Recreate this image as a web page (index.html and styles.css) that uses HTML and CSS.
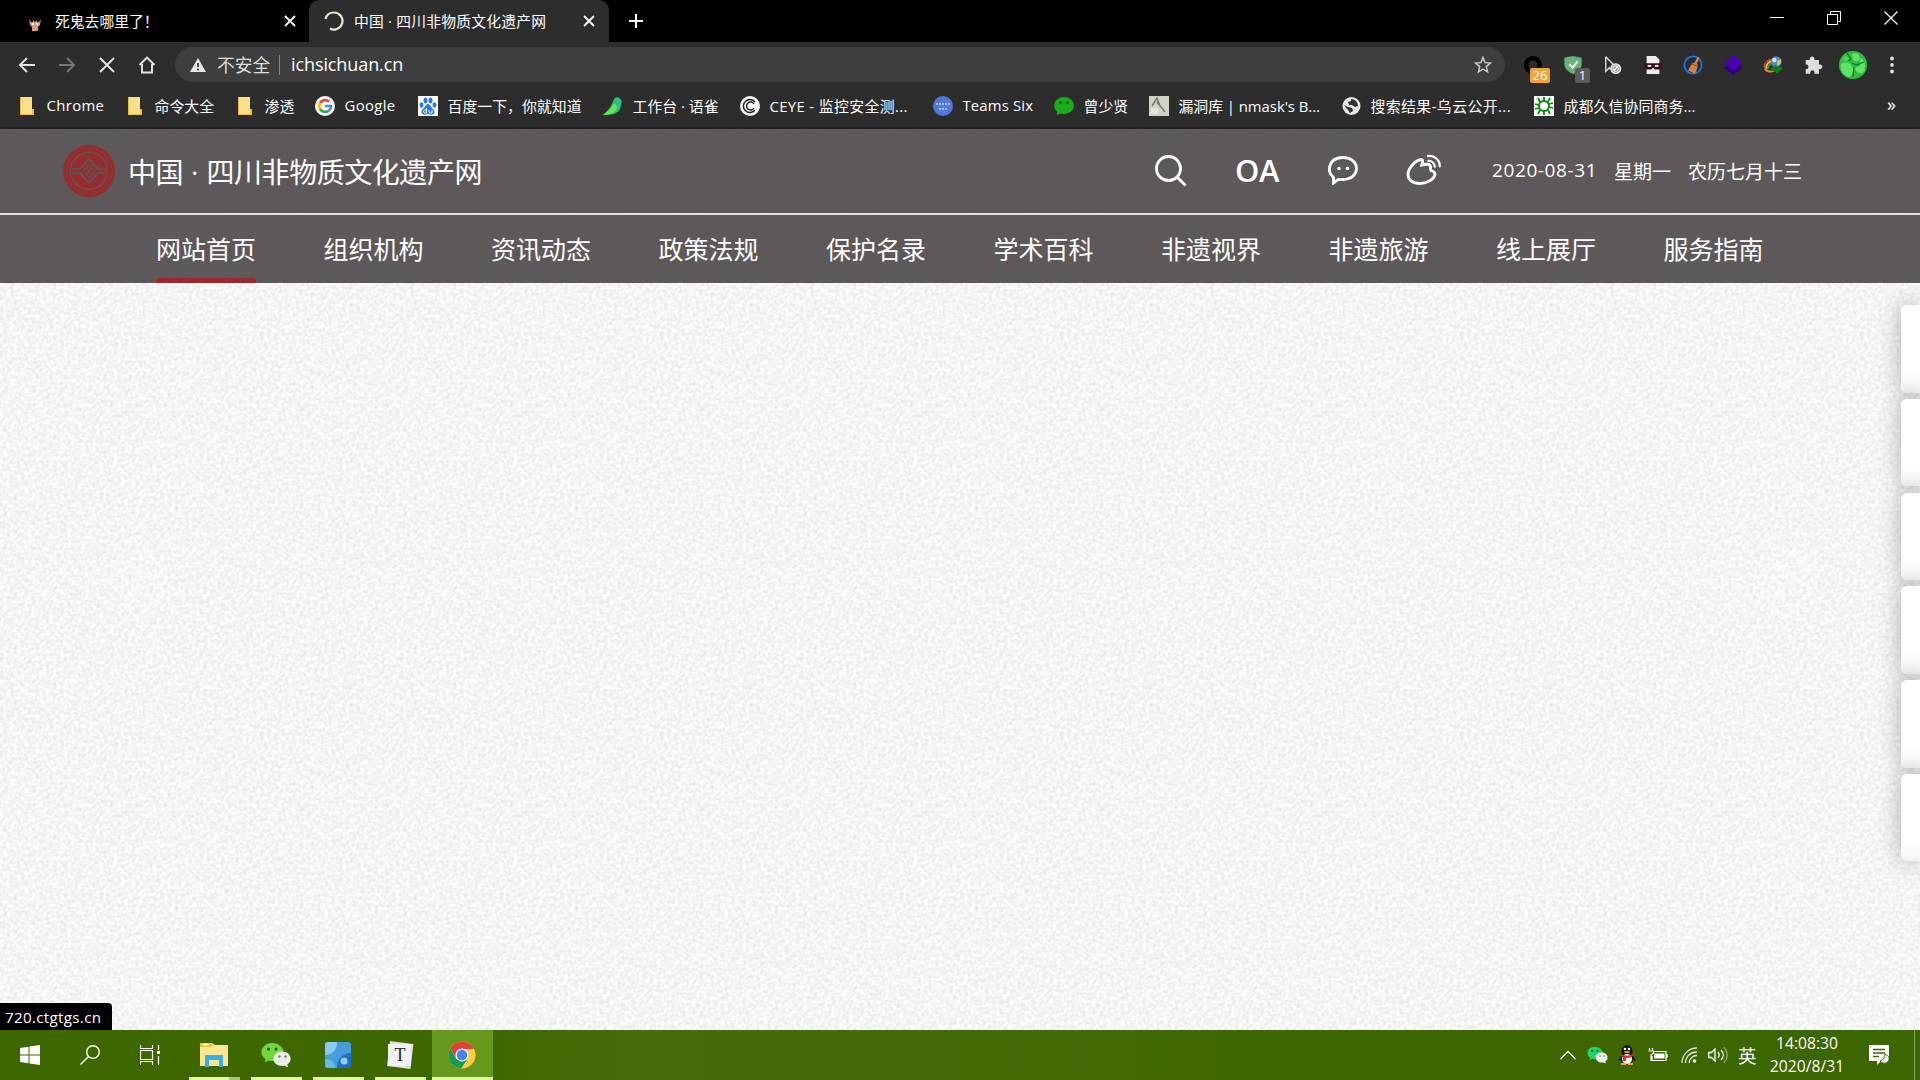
FILE: index.html
```html
<!DOCTYPE html>
<html lang="zh-CN">
<head>
<meta charset="utf-8">
<title>中国 · 四川非物质文化遗产网</title>
<link rel="stylesheet" href="styles.css">
</head>
<body>
<svg width="0" height="0" class="defs">
  <defs>
    <symbol id="folder" viewBox="0 0 20 20"><path d="M3 1h12v12h2v6H3z" fill="#fbe08c"/><path d="M3 1v18h14v-6h-2v5H4V1z" fill="#e8bd3e"/></symbol>
    <symbol id="close" viewBox="0 0 12 12"><path d="M1 1l10 10M11 1L1 11" fill="none" stroke="currentColor" stroke-width="1.8"/></symbol>
    <symbol id="wechat" viewBox="0 0 30 26"><path d="M11 1C5 1 .5 5 .5 10c0 3 1.600 5.500 4 7l-1 3.500 4-2c8 2 15-2 15-8.500C22.500 5 17 1 11 1z" fill="var(--bubble)"/><g fill="#16502a"><circle cx="7.500" cy="7" r="1.500"/><circle cx="15" cy="7" r="1.500"/></g><path d="M21.500 9.500c-5 0-9 3-9 7.200 0 5 5 8 11 7l3.500 1.500-.6-3c2-1.300 3.200-3.200 3.200-5.500 0-4-3.600-7.200-8.100-7.200z" fill="#ececec"/><circle cx="18.500" cy="14.500" r="1.200" fill="#777"/><circle cx="24.500" cy="14.500" r="1.200" fill="#777"/></symbol>
    <symbol id="ornament" viewBox="0 0 60 76"><path d="M30 3l27 22-14 10-22-19M3 32l20-12 33 26-27 27-14-14 13-12M14 31l14 12-12 10L5 41" fill="none" stroke="#fff" stroke-width="4"/></symbol>
  </defs>
</svg>

<header class="browser">
  <div class="tabs">
    <div class="tab">
      <svg class="favicon" viewBox="0 0 14 14"><path d="M1 1l2 3 2 0 0-2 2 2 2-2 0 2 2 0 2-3-1 6-2 2v4H4V9L2 7z" fill="#d79a76"/><path d="M4 5h2v2H4zM8 5h2v2H8z" fill="#fff"/></svg>
      <span class="tab-title ghost">死鬼去哪里了！</span>
      <svg class="x"><use href="#close"/></svg>
    </div>
    <div class="tab active">
      <svg class="spinner" viewBox="0 0 20 20"><path d="M1.500 8A8.500 8.500 0 0 1 10 1.500a8.500 8.500 0 1 1-4 16" fill="none" stroke="#eeead5" stroke-width="2.200"/></svg>
      <span class="tab-title site">中国 · 四川非物质文化遗产网</span>
      <svg class="x"><use href="#close"/></svg>
    </div>
    <svg class="plus" viewBox="0 0 16 16"><path d="M8 1v14M1 8h14" stroke="#fff" stroke-width="2"/></svg>
    <div class="window-buttons">
      <svg viewBox="0 0 14 14"><path d="M0 6.500h14" stroke="#fff"/></svg>
      <svg viewBox="0 0 14 14"><path d="M.5 3.500h10v10H.5zM3.500 3V.5h10v10H11" fill="none" stroke="#fff"/></svg>
      <svg viewBox="0 0 14 14"><path d="M.5.5l13 13M13.500.5l-13 13" stroke="#fff" stroke-width="1.200"/></svg>
    </div>
  </div>

  <div class="toolbar">
    <div class="nav-buttons">
      <svg viewBox="0 0 18 18"><path d="M17 9H2M9 2L2 9l7 7" /></svg>
      <svg viewBox="0 0 18 18" class="dim"><path d="M1 9h15M9 2l7 7-7 7"/></svg>
      <svg viewBox="0 0 18 18"><path d="M2 2l14 14M16 2L2 16"/></svg>
      <svg viewBox="0 0 18 18"><path d="M1.500 9L9 1.500 16.500 9M4 8v8.500h10V8"/></svg>
    </div>
    <div class="omnibox">
      <svg class="warn" viewBox="0 0 16 14"><path d="M8 0l8 14H0z" fill="#e8e8e8"/><path d="M8 5v4M8 10.500v2" stroke="#3e3e3e" stroke-width="1.800"/></svg>
      <span class="insecure">不安全</span>
      <span class="divider"></span>
      <span class="url">ichsichuan.cn</span>
      <svg class="star" viewBox="0 0 20 20"><path d="M10 2.500l2 5.200 5.500.4-4.300 3.500 1.400 5.400-4.600-3-4.600 3 1.400-5.400L2.500 8.100 8 7.700z" fill="none" stroke="#d0d0d0" stroke-width="1.400"/></svg>
    </div>
    <div class="extensions">
      <div class="ext"><svg viewBox="0 0 22 22"><circle cx="11" cy="11" r="7.500" fill="none" stroke="#000" stroke-width="5"/></svg><b class="count orange">26</b></div>
      <div class="ext"><svg viewBox="0 0 22 22"><path d="M11 1l9.500 2v7c0 5-4 9-9.500 11-5-2-9.500-6-9.500-11V3z" fill="#67b279"/><path d="M7 10l3.500 4 5.500-7" fill="none" stroke="#fff" stroke-width="2"/></svg><b class="count gray">1</b></div>
      <div class="ext"><svg viewBox="0 0 22 22"><path d="M3 2v16l4-4 1 2M3 2l9 9" fill="none" stroke="#ddd" stroke-width="1.500"/><circle cx="14" cy="15" r="5.300" fill="#aaa" stroke="#eee" stroke-width="1.500"/><circle cx="14" cy="15" r="3" fill="#888" stroke="#fff"/><path d="M12 17l4-4" stroke="#fff" stroke-width="1.500"/></svg></div>
      <div class="ext"><svg viewBox="0 0 22 22"><path d="M4 1h10l4 4v16H4z" fill="#eee"/><path d="M1 9h20l-1.500 7h-6.500l-2-2-2 2H2.500z" fill="#3b0f16"/><path d="M5 11h4v2H5zM13 11h4v2h-4z" fill="#fff"/></svg></div>
      <div class="ext"><svg viewBox="0 0 22 22"><circle cx="11" cy="11" r="9.500" fill="#242b36" stroke="#1b78df" stroke-width="2"/><path d="M16 2l2 1-2.500 6 1 3-3 8.500-8-3.500 4-7 3.500-2z" fill="#d28443"/><path d="M9 9.500l7.500 3" stroke="#7e451f"/></svg></div>
      <div class="ext"><svg viewBox="0 0 22 22"><path d="M1 14l10-7 10 7-10 8z" fill="#230079"/><path d="M11 0l10 9-10 9L1 9z" fill="#4a00b3"/></svg></div>
      <div class="ext"><svg viewBox="0 0 22 22"><g fill="none" stroke-width="2"><path d="M1.500 14c0-6 4-9 9-9" stroke="#e93f2d"/><path d="M3.500 15c0-5 3-8 7-8" stroke="#f9df32"/><path d="M2 15c3 4 7 4 11 2" stroke="#f08a2a"/><path d="M5.500 15c0-3 2-6 6-6" stroke="#20b040"/></g><circle cx="14.500" cy="7.500" r="6" fill="#4b86d0"/><circle cx="12.500" cy="5.500" r="2.500" fill="#d7e8fb"/><path d="M16 6l4-1-1 5-4 2z" fill="#d7cf55"/><path d="M8 14l5-1v-2l9 3-7 7-1-3c-3 0-5-1-6-4z" fill="#0d7d1a"/></svg></div>
      <div class="ext"><svg viewBox="0 0 22 22"><path d="M3 5.500h4.500c-1-5 6-5 5 0h5v5c5-1 5 6 0 5v5h-5c1-5-5-5-4.500 0H3v-5c4 1 4-6 0-5z" fill="#dedede"/></svg></div>
    </div>
    <svg class="avatar" viewBox="0 0 28 28"><circle cx="14" cy="14" r="14" fill="#2fbd43"/><path d="M2 13c5-3 10-1 12 4 1 4-1 8-4 9C5 25 1 20 2 13zM13 3c5-2 8 1 8 5-3 4-8 3-8-5zM22 7c4 3 5 8 3 10-4 0-6-5-3-10zM16 17c4-3 9-2 10 2-3 5-9 4-10-2z" fill="#5ee567"/><path d="M4 6c3-2 6 0 6 4-3 1-6 0-6-4z" fill="#48d455"/><path d="M8 2l4 6-3 2M13 12l4 2 8-3M15 16l-1 10" stroke="#0f7a22" stroke-width="1.300" fill="none"/></svg>
    <svg class="more" viewBox="0 0 6 20"><g fill="#ddd"><circle cx="3" cy="3.500" r="1.900"/><circle cx="3" cy="10" r="1.900"/><circle cx="3" cy="16.500" r="1.900"/></g></svg>
  </div>

  <div class="bookmarks">
    <div><svg><use href="#folder"/></svg><span class="chrome">Chrome</span></div>
    <div><svg><use href="#folder"/></svg><span>命令大全</span></div>
    <div><svg><use href="#folder"/></svg><span>渗透</span></div>
    <div><svg viewBox="0 0 20 20"><circle cx="10" cy="10" r="10" fill="#fff"/><g fill="none" stroke-width="2.700"><path d="M5 7a6 6 0 0 1 9-1.500" stroke="#ea4335"/><path d="M5 7a6 6 0 0 0 0 6" stroke="#fbbc05"/><path d="M5 13a6 6 0 0 0 9 1.500" stroke="#34a853"/><path d="M14 14.500a6 6 0 0 0 2-4.500h-6" stroke="#4285f4"/></g></svg><span class="google">Google</span></div>
    <div><svg viewBox="0 0 20 20"><path d="M0 0h20v20H0z" fill="#fff"/><g fill="#2b76e8"><ellipse cx="3.500" cy="9" rx="2" ry="2.700"/><ellipse cx="7.500" cy="4.500" rx="2" ry="2.900"/><ellipse cx="12.500" cy="4.500" rx="2" ry="2.900"/><ellipse cx="16.500" cy="9" rx="2" ry="2.700"/><path d="M10 8c2 0 3 3 5 5 4 4 0 7-5 5-5 2-9-1-5-5 2-2 3-5 5-5z"/></g><path d="M8.500 12v5H7c-2 0-2-3 0-3h1M11 14v2c0 1 1 1 2 1h1v-3" fill="none" stroke="#fff"/></svg><span class="baidu">百度一下，你就知道</span></div>
    <div><svg viewBox="0 0 20 20"><path d="M11 3c2-3 6-2 7 1l1 1-1 3c0 8-5 11-18 11C6 14 9 9 11 3z" fill="#26c281"/><path d="M0 19C6 15 9 10 11 8c7 3 1 11-11 11z" fill="#6ee256"/></svg><span>工作台 · 语雀</span></div>
    <div><svg viewBox="0 0 20 20"><circle cx="10" cy="10" r="10" fill="#f4f4f4"/><path d="M15 6a6.500 6.500 0 1 0 0 8M14 8a4 4 0 1 0 0 4" fill="none" stroke="#222" stroke-width="1.400"/></svg><span class="ceye">CEYE - 监控安全测...</span></div>
    <div><svg viewBox="0 0 20 20"><circle cx="10" cy="10" r="10" fill="#5079dc"/><path d="M3 8h14M6 13h8" stroke="#a9c0f5" stroke-width="1.800" stroke-dasharray="2 1"/></svg><span class="teams">Teams Six</span></div>
    <div><svg viewBox="0 0 20 20"><ellipse cx="10" cy="9.500" rx="10" ry="8.500" fill="#1aad19"/><path d="M3 15v4l5-2z" fill="#1aad19"/><circle cx="6.500" cy="6.500" r="1.200" fill="#105d10"/><circle cx="13.500" cy="6.500" r="1.200" fill="#105d10"/></svg><span>曾少贤</span></div>
    <div><svg viewBox="0 0 20 20"><path d="M0 0h20v20H0z" fill="#d3d2ca"/><path d="M3 10L8 2l3 8M8 6l8 10" stroke="#777" fill="none" stroke-width="1.500"/><path d="M2 12h7v6H2z" fill="#e6e5df"/></svg><span class="nmask">漏洞库 | nmask's B...</span></div>
    <div><svg viewBox="0 0 20 20"><circle cx="10.500" cy="10" r="9" fill="#e7e7e7"/><path d="M10 3c4 0 7 3 7 7l-3 1-3-2-3 0-1-3 3-1zM3 9l4 2 4 1 1 3-3 2-2-3z" fill="#333"/></svg><span class="wooyun">搜索结果-乌云公开...</span></div>
    <div><svg viewBox="0 0 20 20"><path d="M0 0h20v20H0z" fill="#fff"/><circle cx="10" cy="10" r="5" fill="none" stroke="#078a0b" stroke-width="2"/><path d="M10 1v4M10 15v4M1 8l4 1M15 11l4 1M4 2l2 4M14 14l2 4M16 2l-2 4M6 14l-2 4M1 13l4-1M15 8l4-1" stroke="#078a0b" stroke-width="1.800"/></svg><span class="chengdu">成都久信协同商务...</span></div>
    <div class="overflow">»</div>
  </div>
</header>

<main class="page">
  <div class="site-head">
    <div class="site-top">
      <svg class="emblem" viewBox="0 0 52 52"><circle cx="26" cy="26" r="26" fill="#982b2d"/><g fill="none" stroke="#685052"><circle cx="26" cy="26" r="22.500" stroke-dasharray="2 2.500" stroke-width="2.500" opacity=".5"/><circle cx="26" cy="26" r="18.500" stroke-width="1.500"/><path d="M9 24h8l9-10 9 10h8M9 28h8l9 10 9-10h8" stroke-width="2.400"/><path d="M26 20l6 6-6 6-6-6zM23 23l6 6M29 23l-6 6" stroke-width="1.300"/></g></svg>
      <h1>中国<i> · </i>四川非物质文化遗产网</h1>
      <div class="site-tools">
        <svg class="t-search" viewBox="0 0 32 32"><circle cx="13.500" cy="13.500" r="12" /><path d="M22 22l8.500 8.500"/></svg>
        <span class="oa">OA</span>
        <svg class="t-chat" viewBox="0 0 30 30"><path d="M5.500 22.500C-2 16 1 2.500 15 2.500c18 0 18 22 0 22-2 0-4 0-5 .2L5.500 28z"/><circle class="dot" cx="11" cy="13.500" r="1.800"/><circle class="dot" cx="19.500" cy="13.500" r="1.800"/></svg>
        <svg class="t-weibo" viewBox="0 0 36 32"><path d="M15 5.500c2 0 2 2 .8 5.500 4-1 8-1.500 8.700 1.500.3 2-.5 3 .5 4 2 1 4 1 4 4-1 5-8 9-15 9C7 29.500 2 26 2 20.500 2 14 10 6 15 5.500z"/><path d="M21 2.200c7-1.500 14 4 12.500 11M21.500 7c4.500-.6 8 3 7 6.500" stroke-width="2.200"/></svg>
      </div>
      <div class="date"><span class="ymd">2020-08-31</span><span>星期一</span><span>农历七月十三</span></div>
    </div>
    <nav class="site-nav">
      <a class="current">网站首页</a><a>组织机构</a><a>资讯动态</a><a>政策法规</a><a>保护名录</a><a>学术百科</a><a>非遗视界</a><a>非遗旅游</a><a>线上展厅</a><a>服务指南</a>
    </nav>
  </div>
  <div class="stage">
    <svg class="arrow prev"><use href="#ornament"/></svg>
    <svg class="arrow next"><use href="#ornament"/></svg>
  </div>
  <aside class="side"><i></i><i></i><i></i><i></i><i></i><i></i></aside>
  <div class="status">720.ctgtgs.cn</div>
</main>

<footer class="taskbar">
  <div class="sys"><svg viewBox="0 0 20 20"><path d="M0 3l8.500-1.200v7.700H0zM9.500 1.600L20 0v9.500H9.500zM0 10.500h8.500v7.700L0 17zM9.500 10.500H20V20L9.500 18.400z" fill="#fff"/></svg></div>
  <div class="sys"><svg viewBox="0 0 20 20"><g fill="none" stroke="#fff" stroke-width="1.400"><circle cx="13" cy="7" r="6.300"/><path d="M8.500 11.500L.5 19.500"/></g></svg></div>
  <div class="sys last"><svg viewBox="0 0 20 20"><path d="M.5 0v3.500h12V0M.5 20v-3.500h12V20M.5 5.500h12v9H.5zM18.500 0v5M18.500 11v9" fill="none" stroke="#fff" stroke-width="1.200"/><path d="M17 6h3v3h-3z" fill="#fff"/></svg></div>
  <div class="app explorer"><svg viewBox="0 0 28 26"><path d="M0 3V1h12l3 2h13v21H0z" fill="#ffe694"/><path d="M0 5V1h11l2 2-1 2z" fill="#f7c223"/><path d="M3 2.500h6" stroke="#fff" stroke-width="1.500"/><path d="M5 25V13h18v12h-4v-7H9v7z" fill="#36b1e8"/></svg></div>
  <div class="app"><svg class="wx"><use href="#wechat"/></svg></div>
  <div class="app"><svg viewBox="0 0 28 28"><rect x="1" y="1" width="26" height="26" rx="3" fill="#4a9ddc"/><path d="M1 14A12 12 0 0 0 13 1H4a3 3 0 0 0-3 3z" fill="#83cdf3"/><path d="M27 12a14 14 0 0 0-14 15h11a3 3 0 0 0 3-3z" fill="#226dca"/><circle cx="20" cy="20" r="3.500" fill="#8cd0f5"/><path d="M1 18a9 9 0 0 1 10 9H4a3 3 0 0 1-3-3z" fill="#67b8e9"/></svg></div>
  <div class="app"><svg viewBox="0 0 28 28"><path d="M4 0l23.500 3-3 25L1 25z" fill="#dcdcdc"/><path d="M2 3h23v22H2z" fill="#f1f1f1"/><text x="14" y="20" text-anchor="middle" font-family="Liberation Serif" font-size="18" fill="#222">T</text></svg></div>
  <div class="app on"><svg viewBox="0 0 28 28"><circle cx="14" cy="14" r="13.500" fill="#ffcd40"/><path d="M14 .5A13.500 13.500 0 0 1 26 8H14L8 17 2.200 7.500A13.500 13.500 0 0 1 14 .5z" fill="#db4437"/><path d="M2.200 7.500L8.200 18 14 20l5-1-6 8.500A13.500 13.500 0 0 1 2.200 7.500z" fill="#0f9d58"/><circle cx="14" cy="14" r="6.500" fill="#fff"/><circle cx="14" cy="14" r="5.300" fill="#4285f4"/></svg></div>
  <div class="tray">
    <svg class="caret" viewBox="0 0 16 10"><path d="M.5 9L8 1.500 15.500 9" fill="none" stroke="#fff" stroke-width="1.400"/></svg>
    <svg class="mini-wx"><use href="#wechat"/></svg>
    <svg class="qq" viewBox="0 0 18 20"><ellipse cx="9" cy="6.500" rx="5.500" ry="6.500" fill="#111"/><path d="M4 9L0 16l3-1c1 6 11 6 12 0l3 1-4-7z" fill="#111"/><ellipse cx="9" cy="14" rx="5" ry="5" fill="#fff"/><circle cx="7" cy="4" r="1.300" fill="#fff"/><circle cx="11" cy="4" r="1.300" fill="#fff"/><ellipse cx="9" cy="7" rx="3" ry="1" fill="#f7a51b"/><path d="M3 9c4 2 8 2 12 0v2c-3 2-6 2-7 2v3H5v-4l-2-1z" fill="#e62828"/><path d="M3 18h5v2H3zM10 18h5v2h-5z" fill="#f7a51b"/></svg>
    <svg class="battery" viewBox="0 0 20 14"><path d="M5 3.500h13v9H4V8M19 6v4M1.500 0v3M4.500 0v3M.5 3h5v2L3 7v6" fill="none" stroke="#fff" stroke-width="1.200"/><path d="M6 5.500h10.500v5H6z" fill="#fff"/></svg>
    <svg class="wifi" viewBox="0 0 16 16"><g fill="none" stroke="#e2e8d8" stroke-width="1.300"><path d="M1 16A15 15 0 0 1 16 1M4.500 16A11 11 0 0 1 16 5M8 16a8 8 0 0 1 8-7.500"/></g><circle cx="13.500" cy="14" r="1.800" fill="#fff"/></svg>
    <svg class="volume" viewBox="0 0 20 18"><path d="M.7 6.500h2.800L7 3v12l-3.500-3.500H.7zM10 6c1.500 2 1.500 4 0 6M13 4c3 3 3 7 0 10" fill="none" stroke="#fff" stroke-width="1.300"/><path d="M16 1c4 5 4 11 0 16" fill="none" stroke="#9db17e" stroke-width="1.200"/></svg>
    <span class="ime">英</span>
    <div class="clock"><span>14:08:30</span><span>2020/8/31</span></div>
    <svg class="notice" viewBox="0 0 20 20"><path d="M0 0h20v16h-8l-4 4v-4H0z" fill="#fff"/><path d="M4 4.500h12M4 8h12M4 11.500h6" stroke="#3e6700" stroke-width="1.500"/><path d="M16 9c0 4-2 6-5 7 4 5 10 1 9-4-1-1-2-2-4-3z" fill="#fff" stroke="#3e6700"/></svg>
    <span class="peek"></span>
  </div>
</footer>
</body>
</html>
```
FILE: styles.css
```css
* { box-sizing: border-box; }
body {
  margin: 0;
  width: 1920px;
  height: 1080px;
  overflow: hidden;
  display: flex;
  flex-direction: column;
  font-family: "Open Sans", "Noto Sans CJK SC", sans-serif;
  color: #fff;
}
.defs { position: absolute; }
svg { display: block; flex: none; }
span { white-space: nowrap; }

/* Browser chrome */
.browser { height: 129px; flex: none; background: #2d2d2d; border-bottom: 2px solid #202020; }
.tabs { height: 42px; background: #000; display: flex; align-items: center; }
.tab { width: 309px; height: 42px; padding: 0 13px 0 28px; display: flex; align-items: center; font-size: 14.800px; }
.tab.active { width: 300px; padding: 0 14px 0 15px; background: #2d2d2d; border-radius: 10px 10px 0 0; }
.tab-title { padding-bottom: 2px; }
.tab-title.site { letter-spacing: .2px; }
.tab .x { width: 12px; height: 12px; margin-left: auto; }
.favicon { width: 14px; height: 14px; margin: 8px 13px 0 0; }
.spinner { width: 20px; height: 20px; margin-right: 10px; }
.plus { width: 16px; height: 16px; margin-left: 19px; }
.window-buttons { margin: -6px 22px 0 auto; display: flex; gap: 43px; }
.window-buttons svg { width: 14px; height: 14px; }

.toolbar { height: 45px; display: flex; align-items: center; }
.nav-buttons { width: 175px; padding-left: 18px; display: flex; gap: 22px; }
.nav-buttons svg { width: 18px; height: 18px; fill: none; stroke: #e6e6e6; stroke-width: 1.900; }
.nav-buttons .dim { stroke: #777; }
.omnibox { width: 1330px; height: 35px; padding: 0 12px 0 15px; border-radius: 18px; background: #3e3e3e; display: flex; align-items: center; font-size: 18px; }
.warn { width: 16px; height: 14px; margin-right: 11px; }
.insecure { color: #ddd; width: 62px; padding-bottom: 2px; font-size: 17.800px; }
.divider { width: 1px; height: 20px; background: #888; margin-right: 11px; }
.url { padding-bottom: 2px; letter-spacing: -.1px; }
.star { width: 20px; height: 20px; margin-left: auto; }
.extensions { display: flex; gap: 18px; margin-left: 17px; }
.ext { width: 22px; height: 22px; position: relative; }
.ext svg { width: 20px; height: 20px; margin: 1px; }
.count { position: absolute; left: 8px; top: 14px; min-width: 15px; height: 15px; padding: 0 2px; border-radius: 2px; font: 13px/15px "Open Sans", sans-serif; text-align: center; }
.orange { background: #f0a33f; width: 20px; }
.gray { background: #5b5b5b; left: 13px; }
.avatar { width: 28px; height: 28px; margin-left: 15px; }
.more { width: 6px; height: 20px; margin-left: 22px; }

.bookmarks { height: 38px; padding-left: 17px; display: grid; grid-template-columns: 108px 110px 80px 103px 185px 137px 193px 121px 95px 192px 193px 353px 20px; align-items: center; font-size: 14.900px; }
.bookmarks div { display: flex; align-items: center; gap: 9.500px; }
.bookmarks svg { width: 20px; height: 20px; }
.bookmarks span { padding-bottom: 2px; }
.bookmarks .overflow { padding-bottom: 5px; font-size: 18px; }
.bookmarks .chrome, .bookmarks .google { letter-spacing: .35px; }
.bookmarks .ceye { letter-spacing: .35px; }
.bookmarks .wooyun { letter-spacing: .4px; }
.bookmarks .teams { letter-spacing: .15px; }
.bookmarks .chengdu { letter-spacing: .1px; }
.bookmarks .nmask { letter-spacing: -.05px; }

/* Web page */
.page {
  flex: 1;
  position: relative;
  background-color: #f4f4f4;
  background-image: url("data:image/svg+xml,%3Csvg xmlns='http://www.w3.org/2000/svg' width='400' height='400'%3E%3Cfilter id='n' x='0' y='0' width='100%25' height='100%25' color-interpolation-filters='sRGB'%3E%3CfeTurbulence type='fractalNoise' baseFrequency='.28' numOctaves='3' stitchTiles='stitch'/%3E%3CfeColorMatrix values='.14 0 0 0 .889 .14 0 0 0 .889 .14 0 0 0 .889 0 0 0 0 1'/%3E%3C/filter%3E%3Crect width='400' height='400' filter='url(%23n)'/%3E%3C/svg%3E");
}
.site-head { height: 154px; background: rgba(76, 71, 72, .9); }
.site-top { height: 86px; padding-left: 63px; border-bottom: 2px solid #e1e5e1; display: flex; align-items: center; }
.emblem { width: 52px; height: 52px; }
h1 { margin: 2px 0 0 13px; width: 360px; font-size: 28px; font-weight: 400; line-height: 40px; letter-spacing: -.45px; white-space: nowrap; }
h1 i { font-style: normal; letter-spacing: .5px; }
.site-tools { margin-left: 667px; display: flex; align-items: center; fill: none; stroke: #fff; stroke-width: 2.800; }
.t-search { width: 32px; height: 32px; margin-top: -1px; }
.oa { width: 44px; margin: -2px 49px 0 48px; font-size: 31px; line-height: 32px; font-weight: 600; letter-spacing: -.5px; }
.t-chat { width: 30px; height: 30px; margin-top: -2px; }
.t-chat .dot { fill: #fff; stroke: none; }
.t-weibo { width: 36px; height: 32px; margin: -2px 0 0 48px; }
.date { margin-left: 50px; display: flex; font-size: 19px; gap: 17px; }
.ymd { width: 105px; letter-spacing: .6px; }
.site-nav { height: 68px; padding-left: 156px; display: flex; gap: 67.500px; }
.site-nav a { width: 100px; height: 68px; font-size: 25px; line-height: 69px; white-space: nowrap; position: relative; }
.current::after { content: ""; position: absolute; left: 0; bottom: 0; width: 100px; height: 5px; border-radius: 3px 3px 0 0; background: #9b282b; }
.stage { padding: 262px 104px 0 108px; display: flex; justify-content: space-between; }
.arrow { width: 60px; height: 76px; opacity: .35; }
.side { position: absolute; right: 0; top: 176px; width: 19px; display: grid; gap: 6.300px; }
.side i { height: 87.500px; border-radius: 6px 0 0 6px; background: linear-gradient(#fff 75%, #f3f3f3); box-shadow: 0 0 22px rgba(0, 0, 0, .32); }
.status { position: absolute; left: 0; bottom: 0; width: 112px; height: 27px; padding-left: 5px; border-radius: 0 4px 0 0; background: #000; font-size: 15.200px; line-height: 28px; letter-spacing: .3px; }

/* Windows taskbar */
.taskbar { height: 50px; flex: none; display: flex; background: linear-gradient(90deg, #3e6700, #3e6700 25%, #486b0b 33%, #3e6700 70%, #3c6600); }
.sys, .app { width: 60px; display: flex; align-items: center; justify-content: center; }
.sys svg { width: 20px; height: 20px; }
.sys.last { width: 64px; padding-right: 4px; }
.app { width: 62px; height: 50px; padding-right: 2px; position: relative; }
.app svg { width: 28px; height: 28px; }
.app .wx { width: 30px; height: 26px; --bubble: #70d83d; }
.app::after { content: ""; position: absolute; left: 5px; bottom: 0; width: 51px; height: 3px; background: #dfffa5; }
.explorer::after { width: 51px; background: linear-gradient(90deg, #dfffa5 40px, #a8c581 40px); }
.app.on { background: #65981b; width: 61px; }
.app.on::after { left: 0; width: 61px; }
.tray { margin-left: auto; width: 360px; display: flex; align-items: center; }
.caret { width: 16px; height: 10px; }
.mini-wx { width: 21px; height: 18px; margin-left: 11px; --bubble: #22d26b; }
.qq { width: 18px; height: 20px; margin-left: 10px; }
.battery { width: 20px; height: 14px; margin-left: 12px; }
.wifi { width: 16px; height: 16px; margin-left: 13px; }
.volume { width: 20px; height: 18px; margin-left: 11px; }
.ime { width: 19px; margin-left: 10px; font-size: 18.500px; }
.clock { width: 80px; margin-left: 10px; display: flex; flex-direction: column; align-items: center; font-size: 15.700px; line-height: 23px; }
.notice { width: 20px; height: 20px; margin-left: 22px; }
.peek { width: 1px; height: 50px; margin-left: 25px; background: #8ba366; }
```
